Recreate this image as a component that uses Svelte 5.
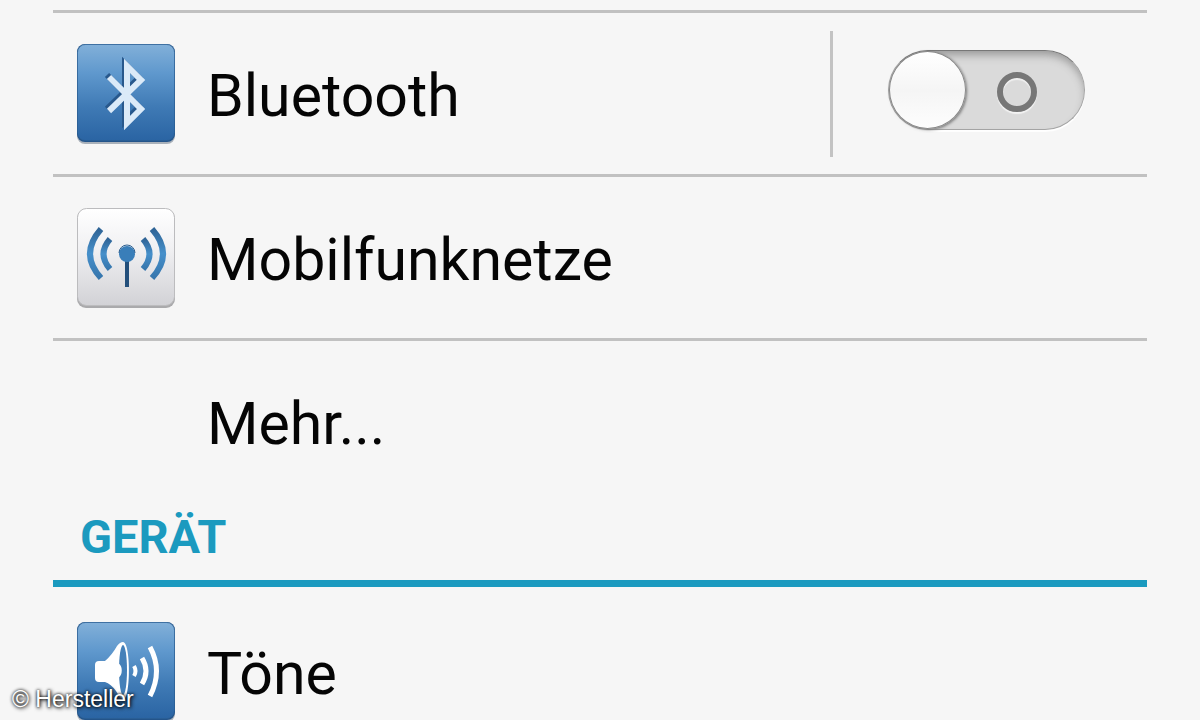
<script>
  let bluetooth = $state(false);
</script>

<main class="settings">
  <ul class="list first">
    <li class="row">
      <a class="entry" href="#bluetooth">
        <svg class="icon" viewBox="0 0 98 100" aria-hidden="true">
          <defs>
            <linearGradient id="blue" x1="0" y1="0" x2="0" y2="1">
              <stop offset="0" stop-color="#82b0d9" />
              <stop offset="0.3" stop-color="#5f98cd" />
              <stop offset="0.65" stop-color="#3f7ab5" />
              <stop offset="1" stop-color="#2a64a3" />
            </linearGradient>
          </defs>
          <rect x="0" y="2" width="98" height="98" rx="8" fill="#a9b1ba" />
          <rect x="0" y="0" width="98" height="98" rx="8" fill="#23548a" />
          <rect x="0.5" y="0.5" width="97" height="96" rx="8" fill="url(#blue)" stroke="#2b5f94" stroke-opacity="0.5" />
          <g fill="none" stroke-width="6" stroke-linejoin="miter">
            <path d="M31 32L63 64L49 78V21L63 35L31 66" stroke="#28588c" transform="translate(-1 -1)" />
            <path d="M32 33L64 65L50 79V22L64 36L32 67" stroke="#dbeaf8" />
          </g>
        </svg>
        <span id="bt-label">Bluetooth</span>
      </a>
      <div class="toggle">
        <input type="checkbox" role="switch" aria-labelledby="bt-label" bind:checked={bluetooth} />
      </div>
    </li>
    <li class="row">
      <a class="entry" href="#mobilfunknetze">
        <svg class="icon" viewBox="0 0 98 100" aria-hidden="true">
          <defs>
            <linearGradient id="silver" x1="0" y1="0" x2="0" y2="1">
              <stop offset="0" stop-color="#ffffff" />
              <stop offset="0.4" stop-color="#f1f1f3" />
              <stop offset="1" stop-color="#d2d2d6" />
            </linearGradient>
            <linearGradient id="wave" x1="0" y1="0" x2="0" y2="1">
              <stop offset="0" stop-color="#2f6496" />
              <stop offset="0.5" stop-color="#4690cb" />
              <stop offset="1" stop-color="#3676ad" />
            </linearGradient>
          </defs>
          <rect x="0" y="2" width="98" height="98" rx="9" fill="#aaaaac" />
          <rect x="0.5" y="0.5" width="97" height="97" rx="9" fill="url(#silver)" stroke="#bcbcbe" />
          <g fill="none" stroke="url(#wave)" stroke-width="6">
            <path d="M24 21Q2 46 24 70" />
            <path d="M33 31Q20 46 33 61" />
            <path d="M66 31Q79 46 66 61" />
            <path d="M75 21Q97 46 75 70" />
          </g>
          <rect x="48" y="50" width="4" height="29" fill="#234f7b" />
          <circle cx="50" cy="46" r="8" fill="#397eb9" />
          <path d="M42 45A8 8 0 0 1 58 45" fill="none" stroke="#2c5f91" stroke-width="1" />
        </svg>
        <span>Mobilfunknetze</span>
      </a>
    </li>
    <li class="row">
      <a class="entry" href="#mehr">
        <span class="icon"></span>
        <span>Mehr...</span>
      </a>
    </li>
  </ul>

  <h2>GERÄT</h2>
  <ul class="list second">
    <li class="row">
      <a class="entry" href="#toene">
        <svg class="icon" viewBox="0 0 98 100" aria-hidden="true">
          <rect x="0" y="2" width="98" height="98" rx="8" fill="#a9b1ba" />
          <rect x="0" y="0" width="98" height="98" rx="8" fill="#23548a" />
          <rect x="0.5" y="0.5" width="97" height="96" rx="8" fill="url(#blue)" stroke="#2b5f94" stroke-opacity="0.5" />
          <path d="M22 39H28Q35 33 40 24Q43 20 46 20C54 20 54 78 46 78Q42 75 39 69Q34 62 28 60H22Q18 60 18 56V43Q18 39 22 39Z" fill="#fff" />
          <ellipse cx="46" cy="48" rx="4" ry="25" fill="#4480b9" />
          <path d="M41 41C46 43 46 54 41 56Z" fill="#fff" />
          <g fill="none" stroke="#fff">
            <path d="M57 44Q60 49 57 54" stroke-width="4" />
            <path d="M65 36Q73 49 65 62" stroke-width="5" />
            <path d="M73 25Q86 49 73 74" stroke-width="5" />
          </g>
        </svg>
        <span>Töne</span>
      </a>
    </li>
  </ul>

  <small class="credit">© Hersteller</small>
</main>

<style>
  :global(body) { margin: 0; background: #f6f6f6; }

  .settings {
    position: relative;
    box-sizing: border-box;
    height: 100vh;
    padding: 10px 53px 0;
    overflow: hidden;
    background: #f6f6f6;
    color: #050505;
    font-family: Roboto, sans-serif;
  }

  .list { margin: 0; padding: 0; list-style: none; }
  .first { border-top: 3px solid #c1c1c1; }
  .second { padding-top: 4px; }

  .row {
    display: flex;
    align-items: center;
    height: 161px;
  }
  .row + .row { border-top: 3px solid #c1c1c1; }

  .entry {
    flex: 1;
    display: flex;
    align-items: center;
    gap: 32px;
    padding-left: 24px;
    color: inherit;
    font-size: 59px;
    line-height: 70px;
    text-decoration: none;
  }
  .entry span { padding-top: 4px; }
  .icon { flex: none; width: 98px; height: 100px; }

  .toggle {
    display: flex;
    align-items: center;
    height: 126px;
    padding: 0 62px 0 55px;
    border-left: 3px solid #c3c3c3;
  }
  .toggle input {
    appearance: none;
    box-sizing: border-box;
    display: flex;
    align-items: center;
    gap: 31px;
    width: 197px;
    height: 80px;
    margin: 0 0 8px;
    border: 1px solid #a4a4a4;
    border-top-color: #777;
    border-radius: 40px;
    background: #dadada;
    box-shadow: inset 0 6px 8px -2px #999, 0 2px 1px #fff;
    cursor: pointer;
  }
  .toggle input::before {
    content: '';
    box-sizing: border-box;
    width: 77px;
    height: 78px;
    border: 1px solid #888;
    border-radius: 50%;
    background: linear-gradient(#ffffff, #f5f5f5 50%, #fdfdfd);
    box-shadow: 1px 1px 3px #777;
  }
  .toggle input::after {
    content: '';
    box-sizing: border-box;
    width: 40px;
    height: 40px;
    margin-top: 4px;
    border: 6px solid #777;
    border-radius: 50%;
    box-shadow: 0 2px 1px #f3f3f3, inset 0 2px 1px #f0f0f0;
  }
  .toggle input:checked { flex-direction: row-reverse; }

  h2 {
    margin: 0;
    padding: 8px 27px 16px;
    border-bottom: 7px solid #1b9abf;
    color: #1b9abf;
    font-size: 47px;
    font-weight: 700;
    line-height: 54px;
  }

  .credit {
    position: absolute;
    left: 12px;
    bottom: 8px;
    color: #fff;
    font-family: "Liberation Sans", Arial, sans-serif;
    font-size: 23px;
    line-height: 26px;
    text-shadow: 0 0 3px #000, 1px 1px 4px #000;
  }
</style>
